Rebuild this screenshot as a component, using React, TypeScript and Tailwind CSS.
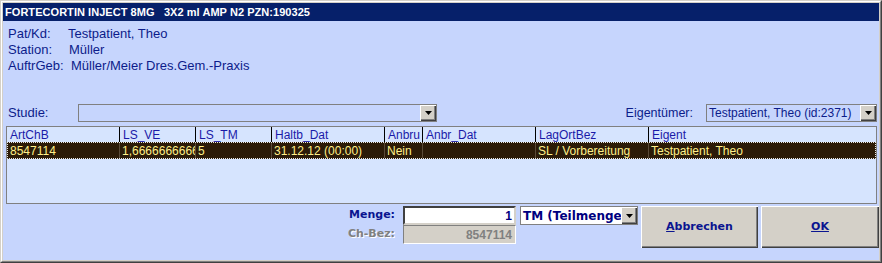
import React from "react";

const sans = { fontFamily: '"Liberation Sans", Arial, sans-serif' };
const dv = { fontFamily: '"DejaVu Sans", Tahoma, sans-serif' };

function DropBtn({ w = 16 }: { w?: number }) {
  return (
    <div
      className="h-full bg-[#d4d0c8] flex items-center justify-center shrink-0 shadow-[inset_1px_1px_0_#ffffff,inset_-1px_-1px_0_#404040,inset_-2px_-2px_0_#808080]"
      style={{ width: w }}
    >
      <svg width="7" height="4" viewBox="0 0 7 4">
        <path d="M0 0H7L3.5 4Z" fill="#000" />
      </svg>
    </div>
  );
}

const cols = [
  { h: "ArtChB", d: "8547114", w: 113 },
  { h: "LS_VE", d: "1,6666666666", w: 76 },
  { h: "LS_TM", d: "5", w: 76 },
  { h: "Haltb_Dat", d: "31.12.12 (00:00)", w: 113 },
  { h: "Anbru", d: "Nein", w: 38 },
  { h: "Anbr_Dat", d: "", w: 113 },
  { h: "LagOrtBez", d: "SL / Vorbereitung", w: 113 },
  { h: "Eigent", d: "Testpatient, Theo", w: 0 },
];

export default function App() {
  return (
    <div className="w-[882px] h-[263px] border border-t-[#d4d0c8] border-l-[#d4d0c8] border-r-[#404040] border-b-[#404040]">
      <div className="w-full h-full border border-t-white border-l-white border-r-[#808080] border-b-[#808080] p-px bg-[#d4d0c8] flex flex-col">
        {/* title */}
        <div
          className="h-[18px] bg-[#06206a] text-white font-bold text-[11px] tracking-[0.05px] flex items-center pl-[2px] whitespace-pre shrink-0"
          style={sans}
        >
          FORTECORTIN INJECT 8MG   3X2 ml AMP N2 PZN:190325
        </div>
        {/* content */}
        <div className="flex-1 bg-[#c6d5fd] flex flex-col text-[12px] text-[#0c1c8a]" style={sans}>
          <div className="pt-[5px] pl-[5px] flex flex-col text-[13px]">
            <div className="h-[16px] flex items-center">
              <span className="w-[60px]">Pat/Kd:</span>
              <span>Testpatient, Theo</span>
            </div>
            <div className="h-[16px] flex items-center">
              <span className="w-[61px]">Station:</span>
              <span>Müller</span>
            </div>
            <div className="h-[16px] flex items-center">
              <span className="w-[63px]">AuftrGeb:</span>
              <span>Müller/Meier Dres.Gem.-Praxis</span>
            </div>
          </div>

          {/* studie row */}
          <div className="mt-[30px] h-[18px] flex items-center pl-[5px] pr-[2px]">
            <span className="w-[70px] text-[13px]">Studie:</span>
            <div className="w-[359px] h-[18px] border border-[#808080] flex justify-end">
              <DropBtn />
            </div>
            <div className="flex-1" />
            <span className="mr-[13px] text-[12.5px]">Eigentümer:</span>
            <div className="w-[171px] h-[18px] border border-[#808080] flex items-center">
              <span className="flex-1 pl-[2px] whitespace-nowrap overflow-hidden">Testpatient, Theo (id:2371)</span>
              <DropBtn />
            </div>
          </div>

          {/* grid */}
          <div className="mt-[4px] ml-[3px] mr-[2px] h-[78px] border border-[#808080] bg-[#d6e4fe] flex flex-col">
            <div className="h-[15px] flex text-[#1a1aa8]">
              {cols.map((c, i) => (
                <div
                  key={i}
                  className={
                    "h-full flex items-center pl-[3px] whitespace-nowrap overflow-hidden " +
                    (c.w ? "border-r border-[#000000] shrink-0" : "flex-1")
                  }
                  style={c.w ? { width: c.w } : undefined}
                >
                  {c.h}
                </div>
              ))}
            </div>
            <div className="h-[17px] flex bg-[#2c1b08] text-[#fff08a] border border-dotted border-[#e8e8e8]">
              {cols.map((c, i) => (
                <div
                  key={i}
                  className={
                    "h-full flex items-center pl-[2px] whitespace-nowrap overflow-hidden " +
                    (c.w ? "border-r border-[#5a4a38] shrink-0" : "flex-1")
                  }
                  style={c.w ? { width: i === 0 ? c.w - 1 : c.w } : undefined}
                >
                  {c.d}
                </div>
              ))}
            </div>
          </div>

          {/* bottom */}
          <div className="mt-[2px] flex justify-end items-start">
            <div className="flex flex-col items-end mr-[8px] font-bold text-[11px]" style={dv}>
              <div className="h-[19px] flex items-center text-[#0a1490]">Menge:</div>
              <div className="h-[19px] flex items-center text-[#808080] [text-shadow:1px_1px_0_#ffffff]">Ch-Bez:</div>
            </div>
            <div className="w-[113px] flex flex-col mr-[4px] font-bold text-[12px]" style={sans}>
              <div className="h-[19px] bg-white border-2 border-t-[#404040] border-l-[#404040] border-r-[#d4d0c8] border-b-[#d4d0c8] flex items-center justify-end pr-[2px] text-[#000080]">
                1
              </div>
              <div className="h-[19px] bg-[#d4d0c8] border border-t-[#808080] border-l-[#808080] border-r-white border-b-white flex items-center justify-end pr-[3px] text-[#808080]">
                8547114
              </div>
            </div>
            <div className="w-[118px] h-[19px] bg-white border border-[#808080] flex items-center mr-[3px]">
              <span className="flex-1 pl-[2px] whitespace-nowrap overflow-hidden font-bold text-[12px] text-[#000080]" style={dv}>
                TM (Teilmengen)
              </span>
              <DropBtn />
            </div>
            <button
              className="w-[117px] h-[42px] bg-[#d4d0c8] mr-[3px] font-bold text-[11px] text-[#0a1490] shadow-[inset_1px_1px_0_#ffffff,inset_-1px_-1px_0_#404040,inset_-2px_-2px_0_#808080]"
              style={dv}
            >
              <span className="underline">A</span>bbrechen
            </button>
            <button
              className="w-[118px] h-[42px] bg-[#d4d0c8] font-bold text-[11px] text-[#0a1490] shadow-[inset_1px_1px_0_#ffffff,inset_-1px_-1px_0_#404040,inset_-2px_-2px_0_#808080]"
              style={dv}
            >
              <span className="underline">OK</span>
            </button>
          </div>
        </div>
      </div>
    </div>
  );
}
